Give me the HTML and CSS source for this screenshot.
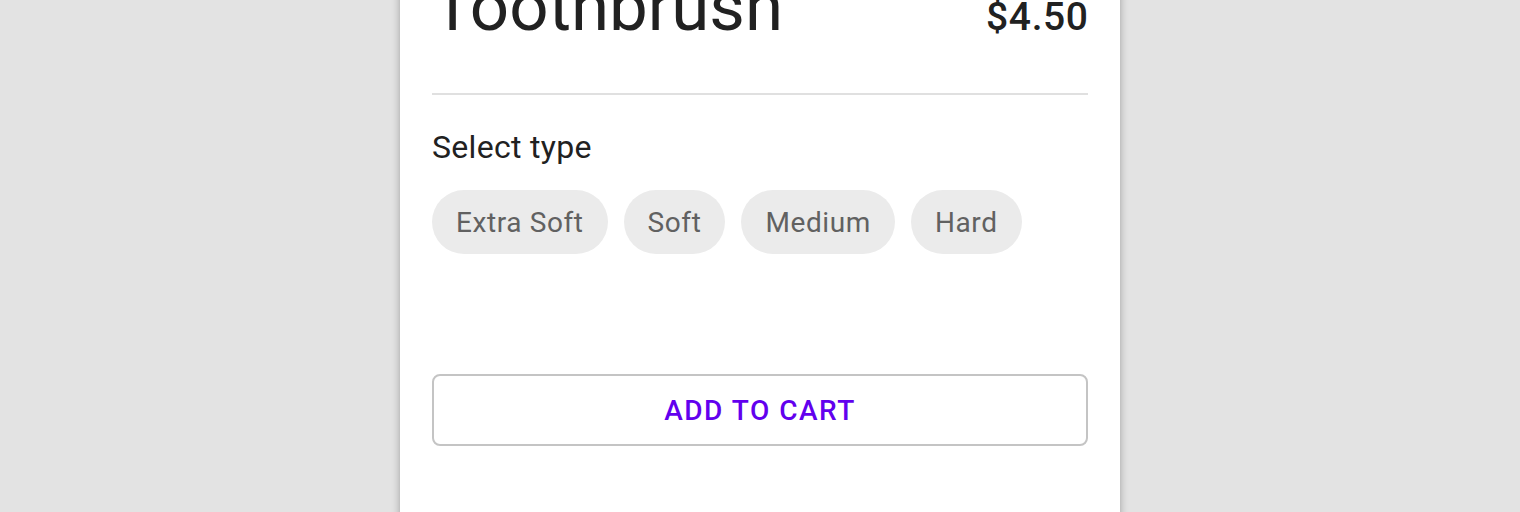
FILE: index.html
```html
<!DOCTYPE html>
<html>
<head>
<meta charset="utf-8">
<link rel="stylesheet" href="styles.css">
</head>
<body>
<div class="card">
  <div class="header">
    <h1 class="title">Toothbrush</h1>
    <div class="price">$4.50</div>
  </div>
  <div class="divider"></div>
  <div class="label">Select type</div>
  <div class="chips">
    <span class="chip">Extra Soft</span>
    <span class="chip">Soft</span>
    <span class="chip">Medium</span>
    <span class="chip">Hard</span>
  </div>
  <button class="cart">ADD TO CART</button>
</div>
</body>
</html>
```
FILE: styles.css
```css
html, body {
  margin: 0;
  padding: 0;
}
body {
  background: #e3e3e3;
  font-family: Roboto, "Noto Sans", sans-serif;
  color: #212121;
  height: 512px;
  overflow: hidden;
}
.card {
  width: 656px;
  margin: -28px auto 0;
  padding: 0 32px 120px;
  background: #fff;
  box-shadow: 0 2px 8px rgba(0, 0, 0, 0.3);
}
.header {
  display: flex;
  justify-content: space-between;
  align-items: baseline;
}
.title {
  margin: 0;
  font-size: 69px;
  font-weight: 400;
  line-height: 1;
}
.price {
  font-size: 39px;
  font-weight: 500;
  letter-spacing: 0.6px;
  margin-right: -0.6px;
  line-height: 1;
}
.divider {
  margin-top: 52px;
  height: 2px;
  background: #e0e0e0;
}
.label {
  margin-top: 36px;
  font-size: 32px;
  letter-spacing: 0.3px;
  line-height: 1;
}
.chips {
  margin-top: 27px;
  display: flex;
  gap: 16px;
}
.chip {
  height: 64px;
  padding: 0 24px;
  border-radius: 32px;
  background: #ebebeb;
  color: #616161;
  font-size: 28px;
  letter-spacing: 0.6px;
  display: flex;
  align-items: center;
}
.cart {
  display: block;
  box-sizing: border-box;
  width: 100%;
  height: 72px;
  margin-top: 120px;
  border: 2px solid #c4c4c4;
  border-radius: 8px;
  background: #fff;
  color: #6200ee;
  font-family: Roboto, "Noto Sans", sans-serif;
  font-size: 28px;
  font-weight: 500;
  letter-spacing: 1.5px;
}
```
